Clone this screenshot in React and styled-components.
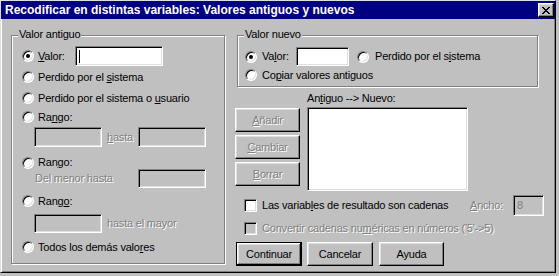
import React from 'react';
import styled, { createGlobalStyle } from 'styled-components';

const Global = createGlobalStyle`
  html, body { margin: 0; padding: 0; background: #c0c0c0; }
  body { font-family: "Liberation Sans", Arial, sans-serif; font-size: 11px; letter-spacing: -0.2px; color: #000; }
  * { box-sizing: border-box; }
  u { text-decoration-thickness: 1px; text-underline-offset: 1px; }
`;

const Window = styled.div`
  width: 556px;
  height: 273px;
  border: 1px solid;
  border-color: #dfdfdf #000 #000 #dfdfdf;
  box-shadow: inset 1px 1px #fff, inset -1px -1px #808080;
  background: #c0c0c0;
  display: flex;
  flex-direction: column;
`;

const TitleBar = styled.div`
  height: 18px;
  flex: none;
  background: #000080;
  display: flex;
  align-items: center;
  justify-content: space-between;
  padding: 0 1px 0 4px;
`;

const TitleText = styled.span`
  color: #fff;
  font-weight: bold;
  font-size: 12px;
  letter-spacing: 0;
  white-space: nowrap;
`;

const CloseButton = styled.div`
  width: 16px;
  height: 14px;
  background: #c0c0c0;
  border: 1px solid;
  border-color: #fff #000 #000 #fff;
  box-shadow: inset -1px -1px #808080, inset 1px 1px #dfdfdf;
  display: flex;
  align-items: center;
  justify-content: center;
`;

const Body = styled.div`
  display: flex;
  padding: 16px 0 0 10px;
`;

const GroupBox = styled.div`
  position: relative;
  width: ${p => p.$w}px;
  height: ${p => p.$h}px;
  margin-left: ${p => p.$ml || 0}px;
  border: 1px solid #808080;
  box-shadow: inset 1px 1px #fff, 1px 1px #fff;
  padding: ${p => p.$pt}px 0 0 ${p => p.$pl}px;
  display: flex;
  flex-direction: column;
`;

const Legend = styled.span`
  position: absolute;
  top: -8px;
  left: 6px;
  padding: 0 1px;
  line-height: 13px;
  background: #c0c0c0;
  white-space: nowrap;
`;

const Row = styled.div`
  display: flex;
  align-items: center;
  height: ${p => p.$h}px;
  margin-top: ${p => p.$mt || 0}px;
  margin-left: ${p => p.$ml || 0}px;
  flex: none;
`;

const Label = styled.span`
  white-space: nowrap;
  margin-left: ${p => p.$ml || 0}px;
  width: ${p => (p.$w ? `${p.$w}px` : 'auto')};
  flex: none;
  line-height: 13px;
  color: ${p => (p.$disabled ? '#808080' : '#000')};
  text-shadow: ${p => (p.$disabled ? '1px 1px 0 #fff' : 'none')};
`;

const Radio = styled.span`
  position: relative;
  width: 12px;
  height: 12px;
  flex: none;
  margin-left: ${p => p.$ml || 0}px;
  border-radius: 50%;
  border: 1px solid;
  border-color: #808080 #fff #fff #808080;
  box-shadow: inset 1px 1px #000, inset -1px -1px #dfdfdf;
  background: #fff;
  &::after {
    content: '';
    display: ${p => (p.$checked ? 'block' : 'none')};
    position: absolute;
    left: 3px;
    top: 3px;
    width: 4px;
    height: 4px;
    border-radius: 50%;
    background: #000;
  }
`;

const Checkbox = styled.span`
  width: 13px;
  height: 13px;
  flex: none;
  margin-left: ${p => p.$ml || 0}px;
  border: 1px solid;
  border-color: #808080 #fff #fff #808080;
  box-shadow: inset 1px 1px #000, inset -1px -1px #dfdfdf;
  background: ${p => (p.$disabled ? '#c0c0c0' : '#fff')};
`;

const Field = styled.div`
  width: ${p => p.$w}px;
  height: ${p => p.$h}px;
  margin-left: ${p => p.$ml || 0}px;
  flex: none;
  border: 1px solid;
  border-color: #808080 #fff #fff #808080;
  box-shadow: inset 1px 1px #000, inset -1px -1px #dfdfdf;
  background: ${p => (p.$disabled ? '#c0c0c0' : '#fff')};
  display: flex;
  align-items: center;
  padding-left: 3px;
  color: #808080;
  line-height: 13px;
`;

const Caret = styled.span`
  width: 1px;
  height: 13px;
  background: #000;
`;

const RightCol = styled.div`
  margin-left: 10px;
  display: flex;
  flex-direction: column;
`;

const Middle = styled.div`
  display: flex;
`;

const ButtonCol = styled.div`
  display: flex;
  flex-direction: column;
  gap: 3px;
  padding-top: 21px;
`;

const ListCol = styled.div`
  display: flex;
  flex-direction: column;
  margin-left: 7px;
`;

const ListLabel = styled.span`
  margin-top: 4px;
  line-height: 14px;
  white-space: nowrap;
`;

const ListBox = styled.div`
  margin-top: 2px;
  width: 161px;
  height: 84px;
  border: 1px solid;
  border-color: #808080 #fff #fff #808080;
  box-shadow: inset 1px 1px #000, inset -1px -1px #dfdfdf;
  background: #fff;
`;

const Button = styled.div`
  width: ${p => p.$w}px;
  height: 24px;
  margin-left: ${p => p.$ml || 0}px;
  flex: none;
  border: 1px solid;
  border-color: ${p => (p.$default ? '#000' : '#fff #000 #000 #fff')};
  box-shadow: ${p =>
    p.$default
      ? 'inset -1px -1px #000, inset 1px 1px #fff, inset -2px -2px #808080, inset 2px 2px #dfdfdf'
      : 'inset -1px -1px #808080, inset 1px 1px #dfdfdf'};
  display: flex;
  align-items: center;
  justify-content: center;
  white-space: nowrap;
  color: ${p => (p.$disabled ? '#808080' : '#000')};
  text-shadow: ${p => (p.$disabled ? '1px 1px 0 #fff' : 'none')};
`;

export default function App() {
  return (
    <>
      <Global />
      <Window>
        <TitleBar>
          <TitleText>Recodificar en distintas variables: Valores antiguos y nuevos</TitleText>
          <CloseButton>
            <svg width="8" height="7" viewBox="0 0 8 7" shapeRendering="crispEdges">
              <path d="M0 0h2v1h-2zM6 0h2v1h-2zM1 1h2v1h-2zM5 1h2v1h-2zM2 2h4v1h-4zM3 3h2v1h-2zM2 4h4v1h-4zM1 5h2v1h-2zM5 5h2v1h-2zM0 6h2v1h-2zM6 6h2v1h-2z" fill="#000" />
            </svg>
          </CloseButton>
        </TitleBar>
        <Body>
          <GroupBox $w={214} $h={229} $pt={10} $pl={10}>
            <Legend>Valor antiguo</Legend>
            <Row $h={20}>
              <Radio $checked />
              <Label $ml={4} $w={37}><u>V</u>alor:</Label>
              <Field $w={88} $h={20}><Caret /></Field>
            </Row>
            <Row $h={20} $mt={1}>
              <Radio />
              <Label $ml={4}>Perdido por el <u>s</u>istema</Label>
            </Row>
            <Row $h={20} $mt={1}>
              <Radio />
              <Label $ml={4}>Perdido por el sistema o <u>u</u>suario</Label>
            </Row>
            <Row $h={18}>
              <Radio />
              <Label $ml={4}>Ra<u>n</u>go:</Label>
            </Row>
            <Row $h={20} $mt={1} $ml={12}>
              <Field $w={68} $h={20} $disabled />
              <Label $ml={5} $w={31} $disabled><u>h</u>asta</Label>
              <Field $w={68} $h={20} $disabled />
            </Row>
            <Row $h={13} $mt={9}>
              <Radio />
              <Label $ml={4}>Ran<u>g</u>o:</Label>
            </Row>
            <Row $h={19} $ml={13}>
              <Label $w={103} $disabled>Del menor hasta</Label>
              <Field $w={68} $h={19} $disabled />
            </Row>
            <Row $h={14} $mt={6}>
              <Radio />
              <Label $ml={4}>Rang<u>o</u>:</Label>
            </Row>
            <Row $h={19} $mt={6} $ml={12}>
              <Field $w={68} $h={19} $disabled />
              <Label $ml={5} $disabled>hasta el mayor</Label>
            </Row>
            <Row $h={18} $mt={5}>
              <Radio />
              <Label $ml={4}>Todos los demás valo<u>r</u>es</Label>
            </Row>
          </GroupBox>
          <RightCol>
            <GroupBox $w={301} $h={52} $ml={2} $pt={11} $pl={7}>
              <Legend>Valor nuevo</Legend>
              <Row $h={19}>
                <Radio $checked />
                <Label $ml={5} $w={34}>Va<u>l</u>or:</Label>
                <Field $w={53} $h={19} />
                <Radio $ml={8} />
                <Label $ml={6}>Perdido por el s<u>i</u>stema</Label>
              </Row>
              <Row $h={14} $mt={2}>
                <Radio />
                <Label $ml={5}>Co<u>p</u>iar valores antiguos</Label>
              </Row>
            </GroupBox>
            <Middle>
              <ButtonCol>
                <Button $w={65} $disabled><u>A</u>ñadir</Button>
                <Button $w={65} $disabled><u>C</u>ambiar</Button>
                <Button $w={65} $disabled><u>B</u>orrar</Button>
              </ButtonCol>
              <ListCol>
                <ListLabel>An<u>t</u>iguo --&gt; Nuevo:</ListLabel>
                <ListBox />
              </ListCol>
            </Middle>
            <Row $h={21} $mt={4}>
              <Checkbox $ml={9} />
              <Label $ml={5} $w={208}>Las variab<u>l</u>es de resultado son cadenas</Label>
              <Label $w={43} $disabled><u>A</u>ncho:</Label>
              <Field $w={31} $h={21} $disabled>8</Field>
            </Row>
            <Row $h={16} $mt={4}>
              <Checkbox $ml={9} $disabled />
              <Label $ml={5} $disabled>Convertir cadenas nu<u>m</u>éricas en números ('5'-&gt;5)</Label>
            </Row>
            <Row $h={24} $mt={6}>
              <Button $w={66} $ml={1} $default>Continuar</Button>
              <Button $w={66} $ml={5}>Cancelar</Button>
              <Button $w={65} $ml={6}>Ayuda</Button>
            </Row>
          </RightCol>
        </Body>
      </Window>
    </>
  );
}
